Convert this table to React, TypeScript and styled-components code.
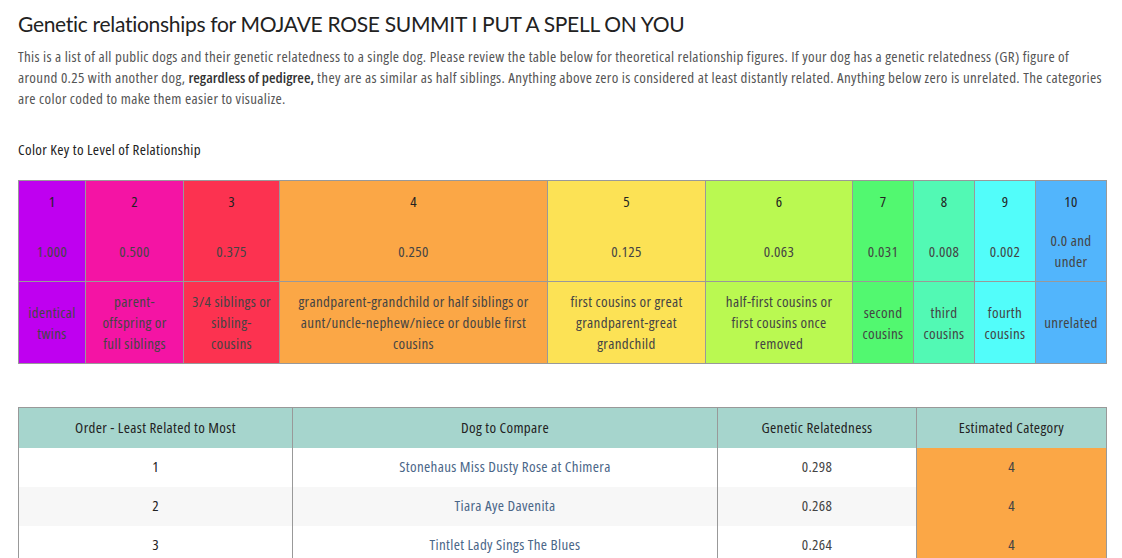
import React from "react";
import styled, { createGlobalStyle } from "styled-components";

const Global = createGlobalStyle`
  html, body { margin: 0; padding: 0; background: #fff; }
  body {
    font-family: "Open Sans", "Noto Sans", sans-serif;
    font-stretch: condensed;
    letter-spacing: 0.35px;
    color: #555;
  }
`;

const Page = styled.div`
  padding: 9px 16px 0 18px;
`;

const Title = styled.h1`
  margin: 0;
  font-family: Lato, "Open Sans", sans-serif;
  font-stretch: normal;
  font-weight: 400;
  font-size: 21px;
  letter-spacing: -0.3px;
  line-height: 30px;
  color: #222;
`;

const Intro = styled.p`
  margin: 7px 0 0;
  font-size: 15px;
  line-height: 21px;
  letter-spacing: 0.35px;
  color: #555;
  b { font-weight: 600; letter-spacing: 0; color: #333; }
`;

const KeyLabel = styled.h4`
  margin: 30px 0 0;
  font-size: 15px;
  line-height: 21px;
  font-weight: 400;
  color: #222;
`;

const KeyTable = styled.table`
  margin-top: 20px;
  width: 1088px;
  border-collapse: collapse;
  table-layout: fixed;
  border: 1px solid #999;
`;

const KeyCell = styled.td<{ $bg: string; $h: number; $pad: number; $top?: boolean; $noBottom?: boolean; $strong?: boolean }>`
  background: ${(p) => p.$bg};
  height: ${(p) => p.$h}px;
  padding: 0 ${(p) => p.$pad}px;
  text-align: center;
  vertical-align: middle;
  font-size: 15px;
  line-height: 21px;
  color: ${(p) => (p.$strong ? "#222" : "#444")};
  border-left: 1px solid #999;
  border-right: 1px solid #999;
  border-top: ${(p) => (p.$top ? "1px solid #999" : "none")};
  border-bottom: ${(p) => (p.$noBottom ? "none" : "1px solid #999")};
`;

const DataTable = styled.table`
  margin-top: 43px;
  width: 1088px;
  border-collapse: collapse;
  table-layout: fixed;
  border: 1px solid #999;
`;

const HeadCell = styled.th`
  background: #a6d5cd;
  height: 38px;
  padding: 0 8px 2px;
  font-weight: 400;
  font-size: 15px;
  color: #222;
  text-align: center;
  border-left: 1px solid #999;
  border-right: 1px solid #999;
`;

const Row = styled.tr<{ $alt: boolean }>`
  background: ${(p) => (p.$alt ? "#f7f7f7" : "#fff")};
`;

const DataCell = styled.td<{ $bg?: string; $dark?: boolean }>`
  height: 36px;
  padding: 0 8px 3px;
  text-align: center;
  font-size: 15px;
  color: ${(p) => (p.$dark ? "#222" : "#444")};
  background: ${(p) => p.$bg || "transparent"};
  border-left: 1px solid #999;
  border-right: 1px solid #999;
`;

const DogLink = styled.a`
  color: #4a6688;
  text-decoration: none;
`;

const keys = [
  { n: "1", v: "1.000", d: "identical twins", c: "#bf00f0", w: 67, pad: 0 },
  { n: "2", v: "0.500", d: "parent-offspring or full siblings", c: "#f414a4", w: 98, pad: 8 },
  { n: "3", v: "0.375", d: "3/4 siblings or sibling-cousins", c: "#fc3250", w: 96, pad: 8 },
  { n: "4", v: "0.250", d: "grandparent-grandchild or half siblings or aunt/uncle-nephew/niece or double first cousins", c: "#fba746", w: 268, pad: 8 },
  { n: "5", v: "0.125", d: "first cousins or great grandparent-great grandchild", c: "#fce255", w: 158, pad: 8 },
  { n: "6", v: "0.063", d: "half-first cousins or first cousins once removed", c: "#baf951", w: 147, pad: 10 },
  { n: "7", v: "0.031", d: "second cousins", c: "#52f870", w: 61, pad: 7 },
  { n: "8", v: "0.008", d: "third cousins", c: "#52f9b4", w: 61, pad: 7 },
  { n: "9", v: "0.002", d: "fourth cousins", c: "#52fdfa", w: 61, pad: 7 },
  { n: "10", v: "0.0 and under", d: "unrelated", c: "#52b5fc", w: 71, pad: 7 },
];

const dogs = [
  { name: "Stonehaus Miss Dusty Rose at Chimera", gr: "0.298", cat: "4" },
  { name: "Tiara Aye Davenita", gr: "0.268", cat: "4" },
  { name: "Tintlet Lady Sings The Blues", gr: "0.264", cat: "4" },
];

export default function App() {
  return (
    <Page>
      <Global />
      <Title>Genetic relationships for MOJAVE ROSE SUMMIT I PUT A SPELL ON YOU</Title>
      <Intro>
        This is a list of all public dogs and their genetic relatedness to a single dog. Please review the table below for
        theoretical relationship figures. If your dog has a genetic relatedness (GR) figure of around 0.25 with another dog,{" "}
        <b>regardless of pedigree,</b> they are as similar as half siblings. Anything above zero is considered at least
        distantly related. Anything below zero is unrelated. The categories are color coded to make them easier to visualize.
      </Intro>
      <KeyLabel>Color Key to Level of Relationship</KeyLabel>
      <KeyTable>
        <colgroup>
          {keys.map((k) => (
            <col key={k.n} style={{ width: k.w }} />
          ))}
        </colgroup>
        <tbody>
          <tr>
            {keys.map((k) => (
              <KeyCell key={k.n} $bg={k.c} $h={40} $pad={k.pad} $top $noBottom $strong>
                {k.n}
              </KeyCell>
            ))}
          </tr>
          <tr>
            {keys.map((k) => (
              <KeyCell key={k.n} $bg={k.c} $h={60} $pad={k.pad}>
                {k.v}
              </KeyCell>
            ))}
          </tr>
          <tr>
            {keys.map((k) => (
              <KeyCell key={k.n} $bg={k.c} $h={81} $pad={k.pad}>
                {k.d}
              </KeyCell>
            ))}
          </tr>
        </tbody>
      </KeyTable>
      <DataTable>
        <colgroup>
          <col style={{ width: 274 }} />
          <col style={{ width: 425 }} />
          <col style={{ width: 199 }} />
          <col style={{ width: 190 }} />
        </colgroup>
        <thead>
          <tr>
            <HeadCell>Order - Least Related to Most</HeadCell>
            <HeadCell>Dog to Compare</HeadCell>
            <HeadCell>Genetic Relatedness</HeadCell>
            <HeadCell>Estimated Category</HeadCell>
          </tr>
        </thead>
        <tbody>
          {dogs.map((d, i) => (
            <Row key={d.name} $alt={i % 2 === 1}>
              <DataCell $dark>{i + 1}</DataCell>
              <DataCell>
                <DogLink href="#">{d.name}</DogLink>
              </DataCell>
              <DataCell>{d.gr}</DataCell>
              <DataCell $bg="#fba746">{d.cat}</DataCell>
            </Row>
          ))}
        </tbody>
      </DataTable>
    </Page>
  );
}
